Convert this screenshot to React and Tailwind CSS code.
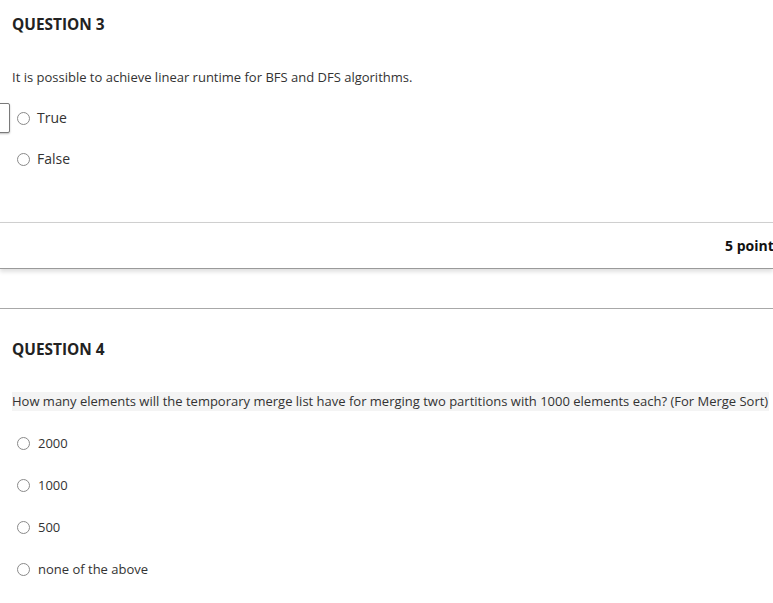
import React from "react";

function Radio({ label, size = "text-[14px]", gap = "gap-[7px]" }) {
  return (
    <label className={`flex items-center h-[20px] pl-[17px] ${gap}`}>
      <span className="block w-[13px] h-[13px] rounded-full border border-[#8a8a8a] bg-white shrink-0"></span>
      <span className={`${size} leading-[20px] text-[#333]`}>{label}</span>
    </label>
  );
}

export default function App() {
  return (
    <div className="w-[773px] h-[603px] overflow-hidden bg-white text-[#333] font-['Open_Sans',sans-serif]">
      {/* question 3 */}
      <div className="relative h-[222px] pl-[12px]">
        <h2 className="pt-[15px] text-[15.4px] leading-[20px] font-bold text-[#222]">QUESTION 3</h2>
        <p className="mt-[32px] text-[13px] leading-[20px]">
          It is possible to achieve linear runtime for BFS and DFS algorithms.
        </p>
        <div className="absolute left-[-20px] top-[103px] w-[30px] h-[30px] border border-[#7a7a7a] rounded-[2px] shadow-[0_1px_2px_rgba(0,0,0,0.25)] bg-white"></div>
        <div className="-ml-[12px] mt-[21px] flex flex-col gap-[21px]">
          <Radio label="True" />
          <Radio label="False" />
        </div>
      </div>

      {/* points bar */}
      <div className="h-[47px] border-t border-b border-t-[#cfcfcf] border-b-[#9a9a9a] shadow-[0_3px_4px_rgba(0,0,0,0.12)] flex items-center">
        <span className="pl-[725px] whitespace-nowrap text-[14px] font-bold text-[#111]">5 points</span>
      </div>

      <div className="h-[39px]"></div>
      <div className="border-t border-[#a8a8a8]"></div>

      {/* question 4 */}
      <div className="pl-[12px]">
        <h2 className="pt-[31px] text-[15.4px] leading-[20px] font-bold text-[#222]">QUESTION 4</h2>
        <p className="mt-[32px] w-[757px] bg-[#f4f4f4] text-[13px] leading-[19px] whitespace-nowrap">
          How many elements will the temporary merge list have for merging two partitions with 1000 elements each? (For Merge Sort)
        </p>
        <div className="-ml-[12px] mt-[22px] flex flex-col gap-[22px]">
          <Radio label="2000" size="text-[13px]" gap="gap-[8px]" />
          <Radio label="1000" size="text-[13px]" gap="gap-[8px]" />
          <Radio label="500" size="text-[13px]" gap="gap-[8px]" />
          <Radio label="none of the above" size="text-[13px]" gap="gap-[8px]" />
        </div>
      </div>
    </div>
  );
}
